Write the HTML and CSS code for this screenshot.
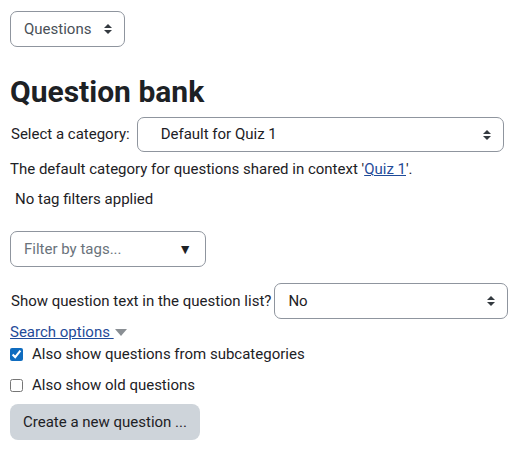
FILE: index.html
```html
<!DOCTYPE html>
<html lang="en">
<head>
    <meta charset="UTF-8">
    <title>Question bank</title>
    <link rel="stylesheet" href="styles.css">
</head>
<body>
    <div class="page">
        <div class="select select-nav">
            <span>Questions</span>
            <svg class="updown" viewBox="0 0 8 10"><path d="M4 0 L8 4 L0 4 Z M0 6 L8 6 L4 10 Z"/></svg>
        </div>

        <h2>Question bank</h2>

        <div class="row row-category">
            <label>Select a category:</label>
            <div class="select select-wide select-cat">
                <span>Default for Quiz 1</span>
                <svg class="updown" viewBox="0 0 8 10"><path d="M4 0 L8 4 L0 4 Z M0 6 L8 6 L4 10 Z"/></svg>
            </div>
        </div>
        <p class="info">The default category for questions shared in context '<a href="#">Quiz 1</a>'.</p>
        <p class="tags-note">No tag filters applied</p>

        <div class="select select-tags">
            <span class="placeholder">Filter by tags...</span>
            <span class="down">&#9660;</span>
        </div>

        <div class="row row-qtext">
            <label>Show question text in the question list?</label>
            <div class="select select-wide select-no">
                <span>No</span>
                <svg class="updown" viewBox="0 0 8 10"><path d="M4 0 L8 4 L0 4 Z M0 6 L8 6 L4 10 Z"/></svg>
            </div>
        </div>

        <div class="search-options">
            <a href="#">Search options </a>
            <svg class="caret" viewBox="0 0 12 7"><path d="M0 0 L12 0 L6 7 Z"/></svg>
        </div>
        <label class="check"><input type="checkbox" checked> Also show questions from subcategories</label>
        <label class="check check-old"><input type="checkbox"> Also show old questions</label>

        <button class="btn">Create a new question ...</button>
    </div>
</body>
</html>
```

FILE: styles.css
```css
body {
    margin: 0;
    font-family: Roboto, "Liberation Sans", sans-serif;
    font-size: 15px;
    line-height: 1.5;
    color: #1d2125;
    background: #fff;
}
.page {
    padding: 11px 10px;
    display: flex;
    flex-direction: column;
    align-items: flex-start;
}
.select {
    box-sizing: border-box;
    height: 36px;
    border: 1px solid #8f959e;
    border-radius: 7px;
    display: flex;
    align-items: center;
    justify-content: space-between;
    padding: 0 12px 0 13px;
    background: #fff;
}
.select-nav {
    width: 115px;
    color: #495057;
}
.updown {
    width: 8px;
    height: 10px;
    fill: #343a40;
}
h2 {
    font-size: 30px;
    font-weight: 700;
    line-height: 36px;
    margin: 27px 0 7px;
}
.row {
    display: flex;
    align-items: center;
    width: 100%;
}
.row label {
    margin-left: 1px;
    margin-right: 7px;
    white-space: nowrap;
    flex-shrink: 0;
}
.select-cat {
    height: 35px;
    flex: 0 0 367px;
    padding-left: 23px;
    padding-right: 12px;
}
.info {
    margin: 5px 0 0;
    line-height: 24px;
}
.info a {
    color: #1f4b99;
}
.tags-note {
    margin: 6px 0 0 5px;
    line-height: 24px;
}
.select-tags {
    width: 196px;
    height: 36px;
    margin-top: 20px;
    padding-right: 13px;
}
.placeholder {
    color: #6a737b;
}
.down {
    font-size: 14px;
    color: #1d2125;
}
.row-qtext {
    margin-top: 16px;
}
.row-qtext label {
    margin-right: 3px;
}
.select-no {
    flex: 0 0 234px;
}
.search-options {
    display: flex;
    align-items: center;
    margin-top: 2px;
    line-height: 22px;
}
.search-options a {
    color: #1f4b99;
    white-space: pre;
}
.caret {
    width: 12px;
    height: 7px;
    fill: #8a8f94;
    margin-left: 1px;
}
.check {
    display: flex;
    align-items: center;
    line-height: 22px;
    margin-top: 0;
}
.check input {
    width: 13px;
    height: 13px;
    margin: 0 9px 0 0;
    accent-color: #0f6cbf;
}
.check-old {
    margin-top: 9px;
}
.btn {
    margin-top: 8px;
    height: 36px;
    width: 190px;
    border: none;
    border-radius: 8px;
    background: #ced4da;
    color: #1d2125;
    font-family: inherit;
    font-size: 15px;
    text-align: left;
    white-space: nowrap;
    padding: 0 13px;
}
```
